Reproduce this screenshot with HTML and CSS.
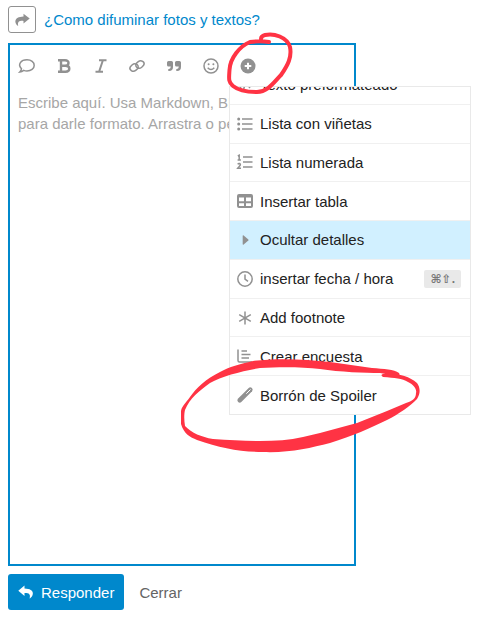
FILE: index.html
```html
<!DOCTYPE html>
<html lang="es">

<head>
    <meta charset="UTF-8">
    <meta name="viewport" content="width=device-width, initial-scale=1.0">
    <title>Responder</title>
    <link rel="stylesheet" href="styles.css">
</head>

<body>
    <header class="respuesta-titulo">
        <button class="bouton-opciones" aria-label="Opciones">
            <svg class="icono" viewBox="0 0 16 16"><path d="M9.500 1.700 L15.700 6.600 L9.500 11.600 V8.900 C5.500 8.700 3.300 9.400 4.200 14 C.300 11.300 -.800 4.700 9.500 4.400 Z"/></svg>
        </button>
        <a href="#" class="enlace-tema">¿Como difuminar fotos y textos?</a>
    </header>

    <main class="editor">
        <div class="barra">
            <button class="bouton-barra" aria-label="Citar mensaje">
                <svg class="icono linea" viewBox="0 0 16 16"><path d="M2.500 10.800 C-1.800 6.300 2 1.800 8 1.800 C12.200 1.800 15.200 4.200 15.200 7.400 C15.200 10.600 12 13 8 13 C6.700 13 5.700 12.800 4.700 12.400 C3.600 13.300 2.300 13.900 .800 14 C1.700 13.100 2.400 12.200 2.500 10.800 Z"/></svg>
            </button>
            <button class="bouton-barra" aria-label="Negrita">
                <svg class="icono negrita" viewBox="0 0 16 16"><path d="M2 2.300 H9 C14 2.300 13.400 7.800 9 7.800 H5 H9.500 C14.600 7.800 14.600 13.700 9.500 13.700 H2 M5 2.300 V13.700"/></svg>
            </button>
            <button class="bouton-barra" aria-label="Cursiva">
                <svg class="icono cursiva" viewBox="0 0 16 16"><path d="M6 2.300 H13.500 M2.500 13.700 H10 M9.900 2.300 L6.100 13.700"/></svg>
            </button>
            <button class="bouton-barra" aria-label="Enlace">
                <svg class="icono linea" viewBox="0 0 16 16"><path d="M9.300 10.200 C7 9.600 6 7 7.400 5.200 L9.300 3.600 C12 1.400 16.600 4.200 14.600 7.300 L12.700 9.200 C11.400 10.300 9.600 10.400 8.700 9.600 M6.700 5.800 C9 6.400 10 9 8.600 10.800 L6.700 12.400 C4 14.600 -.600 11.800 1.400 8.700 L3.300 6.800 C4.600 5.700 6.400 5.600 7.300 6.400"/></svg>
            </button>
            <button class="bouton-barra" aria-label="Cita">
                <svg class="icono" viewBox="0 0 16 16"><path d="M2.500 3 H5.400 Q7 3 7 4.600 V9 Q7 13 3 13 H2.300 V10.900 H3 Q4.800 10.900 4.800 8.600 H2.500 Q1 8.600 1 7.100 V4.500 Q1 3 2.500 3 Z M10.500 3 H13.400 Q15 3 15 4.600 V9 Q15 13 11 13 H10.300 V10.900 H11 Q12.800 10.900 12.800 8.600 H10.500 Q9 8.600 9 7.100 V4.500 Q9 3 10.500 3 Z"/></svg>
            </button>
            <button class="bouton-barra" aria-label="Emoji">
                <svg class="icono linea" viewBox="0 0 16 16"><circle cx="8" cy="8" r="7"/><path d="M4.700 9.800 Q8 13.400 11.300 9.800"/><circle class="relleno" cx="5.600" cy="6.200" r="1"/><circle class="relleno" cx="10.400" cy="6.200" r="1"/></svg>
            </button>
            <button class="bouton-barra" aria-label="Más opciones" onclick="toggleMenu()">
                <svg class="icono" viewBox="0 0 16 16"><circle cx="8" cy="8" r="7.500"/><path class="mas" d="M8 4.700 V11.300 M4.700 8 H11.300"/></svg>
            </button>
        </div>

        <textarea class="texto" aria-label="Respuesta" placeholder="Escribe aquí. Usa Markdown, BBCode o HTML para darle formato. Arrastra o pega imágenes."></textarea>

        <div class="menu" id="menu">
            <ul class="menu-lista">
                <li>
                    <button class="menu-item">
                        <svg class="icono linea" viewBox="0 0 16 16"><path d="M4 4 L1 8 L4 12 M12 4 L15 8 L12 12 M9.500 2 L6.500 14"/></svg>
                        <span>Texto preformateado</span>
                    </button>
                </li>
                <li>
                    <button class="menu-item">
                        <svg class="icono linea" viewBox="0 0 16 16"><path d="M5 3 H15.500 M5 8 H15.500 M5 13 H15.500"/><circle class="relleno" cx="1.700" cy="3" r="1.500"/><circle class="relleno" cx="1.700" cy="8" r="1.500"/><circle class="relleno" cx="1.700" cy="13" r="1.500"/></svg>
                        <span>Lista con viñetas</span>
                    </button>
                </li>
                <li>
                    <button class="menu-item">
                        <svg class="icono linea" viewBox="0 0 16 16"><path d="M6 3 H15.500 M6 8 H15.500 M6 13 H15.500 M.800 2 L2.200 1.300 V6 M.600 6 H3.900 M.800 10.400 C1.500 9 3.800 9.400 3.300 11.100 C3 12 1.500 13 .700 14.200 H4"/></svg>
                        <span>Lista numerada</span>
                    </button>
                </li>
                <li>
                    <button class="menu-item">
                        <svg class="icono tabla" viewBox="0 0 16 16"><rect x="1" y="2" width="14" height="12" rx="1"/><path d="M1 3.500 H15 M1 9.200 H15 M8 4 V14"/></svg>
                        <span>Insertar tabla</span>
                    </button>
                </li>
                <li>
                    <button class="menu-item activo">
                        <svg class="icono" viewBox="0 0 16 16"><path d="M5.700 3.900 Q5.700 2.700 6.700 3.500 L11.300 7.500 Q11.800 8 11.300 8.500 L6.700 12.500 Q5.700 13.300 5.700 12.100 Z"/></svg>
                        <span>Ocultar detalles</span>
                    </button>
                </li>
                <li>
                    <button class="menu-item">
                        <svg class="icono linea" viewBox="0 0 16 16"><circle cx="8" cy="8" r="7.200"/><path d="M8 3.500 V8.200 L11 10.400"/></svg>
                        <span>insertar fecha / hora</span>
                        <kbd class="atajo">⌘⇧.</kbd>
                    </button>
                </li>
                <li>
                    <button class="menu-item">
                        <svg class="icono linea" viewBox="0 0 16 16"><path d="M8 1.500 V14.500 M2.200 4.700 L13.800 11.300 M13.800 4.700 L2.200 11.300"/></svg>
                        <span>Add footnote</span>
                    </button>
                </li>
                <li>
                    <button class="menu-item">
                        <svg class="icono linea" viewBox="0 0 16 16"><path d="M1 1.500 V12.500 Q1 14 2.500 14 H15 M4.500 3 H10 M4.500 6.500 H13.500 M4.500 10 H12"/></svg>
                        <span>Crear encuesta</span>
                    </button>
                </li>
                <li>
                    <button class="menu-item">
                        <svg class="icono" viewBox="0 0 16 16"><path d="M.900 11.700 L11.700 .900 Q13.300 -.400 14.900 1.100 Q16.400 2.700 15.100 4.300 L4.300 15.100 Q2.700 16.400 1.100 14.900 Q-.400 13.300 .900 11.700 Z"/><path class="brillo" d="M9.300 6.700 L13.500 2.500"/></svg>
                        <span>Borrón de Spoiler</span>
                    </button>
                </li>
            </ul>
        </div>
    </main>

    <footer class="acciones">
        <button class="bouton-responder">
            <svg class="icono" viewBox="0 0 16 16"><path d="M6.500 1.500 L.300 6.700 L6.500 11.900 V9.100 C11 9 12.800 10.200 11.600 14.500 C15.600 12.500 18 4.700 6.500 4.400 Z"/></svg>
            <span>Responder</span>
        </button>
        <a href="#" class="enlace-cerrar">Cerrar</a>
    </footer>

    <!-- Marcas rojas a mano -->
    <svg class="marcas" width="500" height="621" viewBox="0 0 500 621" aria-hidden="true">
        <path class="trazo" d="M269 42 C262 41 257 41 250 42 C240 46 230 58 229.500 70 C229 78 228 82 233 86 C239 91 248 92 257 92 C268 92 274 82 281 75 C288 65 292 57 290 47 C287 37 274 33 265 35 Q261 36 261 39"/>
        <path class="mancha" d="M383 377 C395 378 402 378 408 382 C414 385 417 389 416 393 C416 399 412 401 406 403 L387 411 L357 423 L320 433 L303 437 C276 443 246 441 213 439 C201 437 192 433 185 426 C184 420 184 414 185 410 C190 398 199 391 210 383 C222 376 243 371 260 368 C280 367 303 367 320 369 C340 372 365 373 380 373 C388 374 393 376 397 377 Q401 376 399 373 C394 369 384 369 372 368 L330 362 C305 359 275 358 253 361 C240 364 229 367 220 372 C206 379 196 388 190 397 C185 404 181 407 181 412 V424 C184 434 190 437 197 440 C220 448 240 452 263 452 C290 453 310 448 330 443 C353 436 370 428 387 420 C399 414 410 406 417 399 C421 393 420 387 417 383 C409 376 397 373 383 374 Q380 375 383 377 Z"/>
    </svg>

    <script>
        function toggleMenu() {
            document.getElementById('menu').classList.toggle('oculto');
        }
    </script>
</body>

</html>
```

FILE: styles.css
```css
* {
    box-sizing: border-box;
}

body {
    display: flex;
    flex-direction: column;
    position: relative;
    min-height: 100vh;
    margin: 0;
    padding: 6px 8px 11px;
    font-family: "Liberation Sans", Arial, sans-serif;
    font-size: 15px;
    line-height: 21px;
    color: #222;
    background-color: #fff;
}

button {
    font: inherit;
    color: inherit;
    background: none;
    border: none;
    padding: 0;
    cursor: pointer;
}

a {
    text-decoration: none;
}

.icono {
    display: block;
    flex: none;
    width: 16px;
    height: 16px;
    fill: #919191;
    overflow: visible;
}

.linea,
.negrita,
.cursiva,
.tabla {
    fill: none;
    stroke: #919191;
    stroke-width: 1.5;
}

.negrita {
    stroke-width: 2.4;
}

.cursiva,
.tabla {
    stroke-width: 2;
}

.relleno {
    fill: #919191;
    stroke: none;
}

.mas {
    stroke: #fff;
    stroke-width: 2;
}

.brillo {
    stroke: #fff;
    stroke-width: 1;
}

/* Titulo */
.respuesta-titulo {
    display: flex;
    align-items: center;
    gap: 8px;
    margin-bottom: 10px;
}

.bouton-opciones {
    display: flex;
    align-items: center;
    justify-content: center;
    width: 28px;
    height: 27px;
    border: 1px solid #919191;
    border-radius: 3px;
}

.enlace-tema {
    color: #0088cc;
}

/* Editor */
.editor {
    display: flex;
    flex-direction: column;
    flex: 1;
    position: relative;
    width: 72%;
    border: 2px solid #0088cc;
}

.barra {
    display: flex;
    justify-content: space-between;
    width: 74%;
}

.bouton-barra {
    display: flex;
    align-items: center;
    justify-content: center;
    width: 34px;
    height: 41px;
}

.texto {
    flex: 1;
    padding: 6px 8px;
    border: none;
    outline: none;
    resize: none;
    font: inherit;
    color: #222;
    background: none;
}

.texto::placeholder {
    color: #a6a6a6;
    opacity: 1;
}

/* Menu, desplazado hasta el final de la lista */
.menu {
    display: flex;
    align-items: flex-end;
    position: absolute;
    top: 41px;
    left: 219px;
    width: 242px;
    height: 329px;
    overflow: hidden;
    background-color: #fff;
    border: 1px solid #e9e9e9;
}

.oculto {
    display: none;
}

.menu-lista {
    display: grid;
    grid-auto-rows: 1fr;
    flex: none;
    width: 100%;
    height: 349px;
    margin: 0;
    padding: 0;
    list-style: none;
}

.menu-lista li + li {
    border-top: 1px solid #f0f0f0;
}

.menu-item {
    display: flex;
    align-items: center;
    gap: 7px;
    width: 100%;
    height: 100%;
    padding: 0 9px 0 7px;
    text-align: left;
}

.menu-item:hover,
.activo {
    background-color: #d1f0ff;
}

.atajo {
    margin-left: auto;
    padding: 0 6px;
    font-family: "Liberation Sans", "DejaVu Sans", sans-serif;
    font-size: 12px;
    font-weight: bold;
    line-height: 18px;
    color: #777;
    background-color: #e9e9e9;
    border-radius: 2px;
}

/* Botones de abajo */
.acciones {
    display: flex;
    align-items: center;
    gap: 15px;
    margin-top: 8px;
}

.bouton-responder {
    display: flex;
    align-items: center;
    gap: 7px;
    height: 36px;
    padding: 0 10px;
    color: #fff;
    background-color: #0088cc;
    border-radius: 3px;
}

.bouton-responder .icono {
    fill: #fff;
}

.enlace-cerrar {
    color: #646464;
}

.marcas {
    position: absolute;
    top: 0;
    left: 0;
    pointer-events: none;
}

.trazo {
    fill: none;
    stroke: #ff3344;
    stroke-width: 4;
    stroke-linecap: round;
    stroke-linejoin: round;
}

.mancha {
    fill: #ff3344;
}
```
